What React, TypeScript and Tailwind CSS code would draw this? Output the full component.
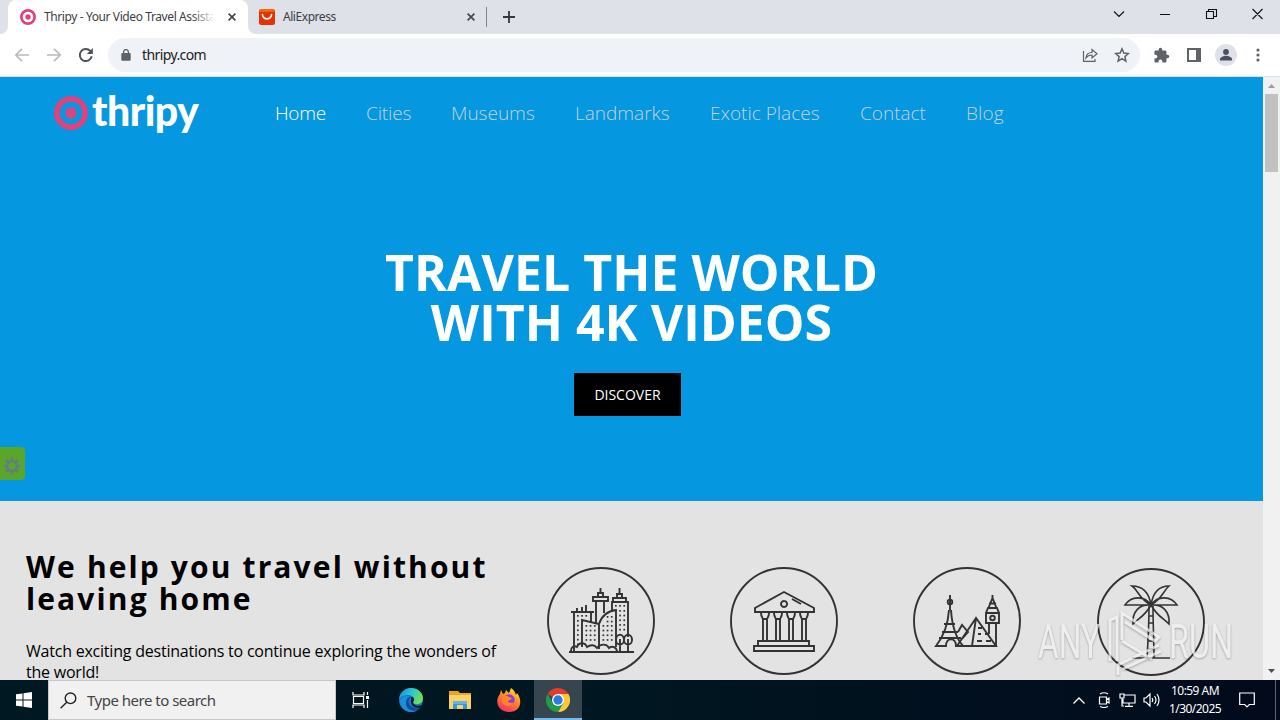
import { ReactNode } from "react";
import { MdExtension } from "react-icons/md";

/* ── Data ── */
const NAV_ITEMS = [
  { label: "Home", className: "w-[91px] tracking-[-0.3px] text-white" },
  { label: "Cities", className: "w-[85px] tracking-[-0.15px] text-[#c3d3dc]" },
  { label: "Museums", className: "w-[124px] text-[#c3d3dc]" },
  { label: "Landmarks", className: "w-[135px] text-[#c3d3dc]" },
  { label: "Exotic Places", className: "w-[150px] text-[#c3d3dc]" },
  { label: "Contact", className: "w-[106px] text-[#c3d3dc]" },
  { label: "Blog", className: "tracking-[0.1px] text-[#c3d3dc]" },
];

const win = (x: number, y: number, key: string) => (
  <rect key={key} x={x} y={y} width="1.7" height="1.7" fill="#333" stroke="none" />
);

function windows(x: number, y: number, cols: number, rows: number) {
  const out: ReactNode[] = [];
  for (let r = 0; r < rows; r++) {
    for (let c = 0; c < cols; c++) out.push(win(x + c * 4.2, y + r * 4.7, `${x}-${y}-${r}-${c}`));
  }
  return out;
}

/* ── Browser chrome ── */
function Target({ className }: { className: string }) {
  return (
    <svg viewBox="0 0 32 32" className={className} fill="none">
      <circle cx="16" cy="16" r="13.3" stroke="#dc437f" strokeWidth="5.4" />
      <circle cx="16" cy="16" r="5.3" fill="#dc437f" />
    </svg>
  );
}

function CloseIcon() {
  return (
    <svg viewBox="0 0 8 8" className="h-2 w-2 shrink-0" stroke="#45494e" strokeWidth="1.7">
      <path d="M.6.6l6.8 6.8M7.4.6L.6 7.4" />
    </svg>
  );
}

function TabStrip() {
  return (
    <div className="flex h-[34px] bg-[#dee1e8] text-[12px] text-[#3c4043]">
      <div className="flex w-2 bg-white">
        <div className="w-2 rounded-br-lg bg-[#dee1e8]" />
      </div>
      <div className="flex w-[240px] items-center rounded-t-lg bg-white pl-3">
        <Target className="h-4 w-4 shrink-0" />
        <div className="relative ml-2 h-[18px] w-[171px] overflow-hidden whitespace-nowrap leading-[18px] tracking-[-0.4px]">
          Thripy - Your Video Travel Assista
          <div className="absolute inset-y-0 right-0 w-6 bg-linear-to-r from-transparent to-white" />
        </div>
        <div className="ml-[13px]">
          <CloseIcon />
        </div>
      </div>
      <div className="flex w-[239px] bg-white">
        <div className="flex flex-1 items-center rounded-bl-lg bg-[#dee1e8] pl-[11px]">
          <svg viewBox="0 0 16 16" className="h-4 w-4" fill="none">
            <rect width="16" height="16" rx="2.5" fill="#e43204" />
            <path d="M0 2.800V2.500Q0 0 2.500 0h11Q16 0 16 2.500v.3z" fill="#f36b0c" />
            <path d="M3.400 5.500c1 5.800 8.200 5.800 9.200 0" stroke="#fff" strokeWidth="1.500" strokeLinecap="round" />
          </svg>
          <span className="ml-2 w-[184px] tracking-[-0.45px]">AliExpress</span>
          <CloseIcon />
          <div className="ml-[11px] h-5 w-px bg-[#81858b]" />
        </div>
      </div>
      <svg viewBox="0 0 12 12" className="mt-[11px] ml-4 h-3 w-3" stroke="#35383d" strokeWidth="1.8">
        <path d="M6 0v12M0 6h12" />
      </svg>
      <svg viewBox="0 0 166 12" className="mt-2 mr-[17px] ml-auto h-3 w-[166px]" fill="none" stroke="#111" strokeWidth="1.100">
        <path d="M17 3.500l5 5 5-5M63 6.500h10M109.500 3.500h7v7h-7zM111.500 3.500v-2h8v7h-2.500M155.500 1l10 10M165.500 1l-10 10" />
      </svg>
    </div>
  );
}

function Toolbar() {
  return (
    <div className="flex h-[43px] items-center border-b border-[#cfe4ef] bg-white pl-[14px] text-[#5f6368]">
      <svg viewBox="0 0 16 14" className="h-[14px] w-4" fill="none" stroke="#b9bbbe" strokeWidth="1.7">
        <path d="M15 7H2M8 .8L1.800 7 8 13.200" />
      </svg>
      <svg viewBox="0 0 16 14" className="ml-4 h-[14px] w-4" fill="none" stroke="#b9bbbe" strokeWidth="1.7">
        <path d="M1 7h13M8 .8L14.200 7 8 13.200" />
      </svg>
      <svg viewBox="0 0 16 16" className="ml-4 h-4 w-4" fill="none" stroke="#4e5156" strokeWidth="1.900">
        <path d="M13.700 9.200a6 6 0 1 1-1.500-5.300L14 5.700" />
        <path d="M14.800 1v6h-6z" fill="#4e5156" stroke="none" />
      </svg>
      <div className="ml-[14px] flex h-[34px] w-[1032px] items-center rounded-full bg-[#eff2f6] pl-[13px]">
        <svg viewBox="0 0 10 12" className="h-3 w-[10px]" fill="none">
          <rect x=".3" y="4" width="9.400" height="7.800" rx="1" fill="#5f6368" />
          <path d="M2.600 4.500V3a2.400 2.400 0 0 1 4.800 0v1.500" stroke="#5f6368" strokeWidth="1.300" />
        </svg>
        <span className="ml-[11px] pb-px text-[14px] tracking-[-0.6px] text-[#202124]">thripy.com</span>
        <svg viewBox="0 0 16 16" className="ml-auto h-4 w-4" fill="none" stroke="currentColor" strokeWidth="1.200">
          <path d="M1.500 4v10.400H13V12M4 11c.3-4 2.500-5.500 6-5.500V2.500l5 4.200-5 4.200V8C7.500 8 5.600 8.600 4 11z" />
        </svg>
        <svg viewBox="0 0 16 16" className="mr-[10px] ml-4 h-4 w-4" fill="none" stroke="currentColor" strokeWidth="1.500">
          <path d="M8 1.800l1.800 4.300 4.600.4-3.500 3.100 1 4.500L8 11.700l-3.900 2.400 1-4.500L1.600 6.500l4.600-.4z" />
        </svg>
      </div>
      <MdExtension className="ml-[13px] h-[17px] w-[17px]" />
      <svg viewBox="0 0 14 14" className="ml-[17px] h-[14px] w-[14px]">
        <path d="M1 1h12v12H1z" fill="none" stroke="currentColor" strokeWidth="2" />
        <path d="M9 0h5v14H9z" fill="currentColor" />
      </svg>
      <svg viewBox="0 0 22 22" className="ml-[14px] h-[22px] w-[22px]">
        <circle cx="11" cy="11" r="11" fill="#dfe1e8" />
        <circle cx="11" cy="7.900" r="2.900" fill="#4b4f63" />
        <path d="M5 16.500v-1.400c0-2 4-3.300 6-3.300s6 1.300 6 3.300v1.400z" fill="#4b4f63" />
      </svg>
      <svg viewBox="0 0 4 14" className="ml-[19px] h-[14px] w-1" fill="currentColor">
        <circle cx="2" cy="2" r="1.600" />
        <circle cx="2" cy="7" r="1.600" />
        <circle cx="2" cy="12" r="1.600" />
      </svg>
    </div>
  );
}

/* ── Category icons, drawn in a 108px circle ── */
function Badge({ children }: { children: ReactNode }) {
  return (
    <svg viewBox="0 0 108 108" className="h-[108px] w-[108px] shrink-0" fill="none" stroke="#333" strokeWidth="1.900">
      <circle cx="54" cy="54" r="53" />
      {children}
    </svg>
  );
}

function CityIcon() {
  return (
    <Badge>
      <path d="M22 85h65M27 84V45M24 45h23M30 45v-4M35 45v-5M39 45v-7M44 45v10M35 80V53l17 4v25M52 57c3-9 9-13 17-14v37" />
      <path d="M46 30h15v4H46zM49 34v22M57 34v12M51 30v-4h5v4M53.500 26v-5" />
      <path d="M65 43v-8h16v35M66 35v-4h13v4M70 31v-4h5v4M72.500 27v-6" />
      <path d="M24 84c0-4 3-6 6-4 2-5 8-5 10 0 4-3 8-2 10 1 4-5 10-4 12 0 4-3 8 0 8 4" />
      <path d="M73 85V72M81 85V72M69 73c0-7 8-7 8 0 0 6-8 6-8 0zM77 73c0-7 8-7 8 0 0 6-8 6-8 0z" />
      {windows(30, 48, 3, 1)}
      {windows(30, 53, 1, 6)}
      {windows(38.500, 58, 3, 4)}
      {windows(55.500, 58, 3, 4)}
      {windows(59.700, 49, 2, 2)}
      {windows(68, 38, 3, 1)}
      {windows(72.200, 43, 2, 5)}
    </Badge>
  );
}

function MuseumIcon() {
  return (
    <Badge>
      <path d="M25 45v-4l29-16 30 16v4zM54 34a3 3 0 1 0 .1 0M62 32l9 5M28 74h51v5H28zM24 79h60v5H24z" />
      <path d="M31 46c0 3 1 4 2 6h4c1-2 2-3 2-6M44 46c0 3 1 4 2 6h4c1-2 2-3 2-6M57 46c0 3 1 4 2 6h4c1-2 2-3 2-6M70 46c0 3 1 4 2 6h4c1-2 2-3 2-6" />
      <path d="M33 52v22M37 52v22M46 52v22M50 52v22M59 52v22M63 52v22M72 52v22M76 52v22" />
    </Badge>
  );
}

function LandmarkIcon() {
  return (
    <Badge>
      <path d="M37 28v15M36 43c-1 16-6 27-13 36h10c0-9 10-9 10 0h7c-7-8-11-20-12-36M31 57h11M29 65h16M26 71h22" />
      <circle cx="37" cy="35" r="2.300" />
      <path d="M45 65l4-7 6 7-6 7M63 51L44 79h39zM63 51l-4 28M65 61h4M65 67h3M72 67h4M64 74h5M73 74h5" />
      <path d="M73 46h13v10H73zM73 46l2-5h9l2 5M75.500 41l4-10 4 10M79.500 31v-3M76 36.500h7M76 57v10M83 57v22" />
      <circle cx="79.500" cy="51" r="2.300" />
    </Badge>
  );
}

function PalmIcon() {
  return (
    <Badge>
      <g strokeWidth="1.600">
        <path d="M54 37C52 24 45 18 35 18c6 4 7 13 19 19C56 24 63 18 72 18c-5 4-7 13-18 19M54 37C47 27 34 28 28 37zM54 37c7-10 20-9 26 0zM54 37c-12-1-19 7-18 19 6-6 12-8 18-19zM54 37c12-1 19 7 18 19-6-6-12-8-18-19z" />
        <path d="M52 38c0 20-1 36-2 52M56 38c0 20 1 36 1 52M52 48h4M51 55h5M51 64h5M51 73h5M51 81h6M35 90h38" />
      </g>
    </Badge>
  );
}

/* ── Page sections ── */
function Hero() {
  return (
    <section className="relative h-[424px] bg-[#0597df] text-white">
      <header className="flex pt-[15px] pl-[54px]">
        <Target className="mt-1 h-[34px] w-[34px]" />
        <div className="ml-1 h-[50px] w-[111px] font-['Lato'] text-[41px] leading-[37px] font-black tracking-[-0.5px]">thripy</div>
        <nav className="ml-[72px] flex pt-[6px] font-['Open_Sans'] text-[19px] leading-[30px] font-light whitespace-nowrap">
          {NAV_ITEMS.map((item) => (
            <a key={item.label} className={item.className}>
              {item.label}
            </a>
          ))}
        </nav>
      </header>
      <h1 className="mt-[105px] text-center font-['Open_Sans'] text-[50px] leading-[50px] font-bold">
        TRAVEL THE WORLD
        <br />
        WITH 4K VIDEOS
      </h1>
      <button className="mt-[26px] ml-[574px] h-[43px] w-[107px] bg-black font-['Open_Sans'] text-[14px]">
        DISCOVER
      </button>
      <div className="absolute top-[370px] left-0 flex h-[33px] w-[25px] items-center rounded-r bg-[#5aa62b] pt-1 pl-[3px]">
        <svg viewBox="0 0 18 18" className="h-[18px] w-[18px]" fill="none" stroke="#607f80" strokeWidth="2.500">
          <circle cx="9" cy="9" r="5" />
          <path d="M9 .5v4M9 13.500v4M.5 9h4M13.500 9h4M3 3l3 3M12 12l3 3M15 3l-3 3M6 12l-3 3" />
        </svg>
      </div>
    </section>
  );
}

function Intro() {
  return (
    <section className="flex h-[179px] overflow-hidden bg-[#e3e3e3] text-black">
      <div className="w-[547px] shrink-0 pt-[50px] pl-[26px]">
        <h2 className="font-['Open_Sans'] text-[30px] leading-8 font-bold tracking-[2.12px] whitespace-nowrap">
          We help you travel without
          <br />
          leaving home
        </h2>
        <p className="mt-[26px] font-['Open_Sans'] text-[16px] leading-[21px] tracking-[-0.22px] whitespace-nowrap">
          Watch exciting destinations to continue exploring the wonders of
          <br />
          the world!
        </p>
      </div>
      <div className="flex gap-[75px] pt-[66px]">
        <CityIcon />
        <MuseumIcon />
        <LandmarkIcon />
        <div className="ml-px pt-px">
          <PalmIcon />
        </div>
      </div>
    </section>
  );
}

function Scrollbar() {
  return (
    <div className="flex w-[17px] flex-col items-center bg-[#f1f1f1]">
      <svg viewBox="0 0 17 17" className="h-[17px] w-[17px]">
        <path d="M5 11l3.500-4 3.500 4z" fill="#9c9c9c" />
      </svg>
      <div className="h-[78px] w-[13px] bg-[#c1c1c1]" />
      <svg viewBox="0 0 17 17" className="mt-auto h-[17px] w-[17px]">
        <path d="M5 6l3.500 4L12 6z" fill="#505050" />
      </svg>
    </div>
  );
}

function Watermark() {
  return (
    <svg viewBox="0 0 210 70" className="absolute top-[607px] left-[1032px] h-[70px] w-[210px] opacity-70 drop-shadow-[0px_1px_1px_rgba(0,0,0,.4)]">
      <g fill="#f4f4f4" fontFamily="Roboto" fontSize="49" fontWeight="400">
        <text x="6" y="51" textLength="62" lengthAdjust="spacingAndGlyphs">ANY</text>
        <text x="137" y="51" textLength="64" lengthAdjust="spacingAndGlyphs">RUN</text>
      </g>
      <g fill="none" stroke="#f4f4f4" strokeWidth="3">
        <path d="M78 54V13l7-3v44M90 33V6l37 24-4 4-30-19M90 34l30 18M91 62l38-18M86 68V58l41-20" />
      </g>
    </svg>
  );
}

/* ── Taskbar ── */
function EdgeIcon() {
  return (
    <svg viewBox="0 0 24 24" className="h-6 w-6">
      <defs>
        <linearGradient id="edge" x1="0" y1="0" x2="1" y2=".3">
          <stop stopColor="#168bd5" />
          <stop offset=".55" stopColor="#2cc4d4" />
          <stop offset="1" stopColor="#69e05c" />
        </linearGradient>
      </defs>
      <circle cx="12" cy="12" r="12" fill="#1474c4" />
      <path d="M0 11C1 4 6 0 12 0c7 0 12 5 12 10 0 5-4 7-8 6-3-1-1-2-1-4 0-6-10-7-15-1z" fill="url(#edge)" />
      <path d="M8 11c-2 5 2 11 9 12-8 3-16-2-16-10 1-5 7-6 10-5-2 1-3 2-3 3z" fill="#1b8edc" />
      <path d="M12 9c-6 4-1 13 9 11-5 5-14 3-14-5 0-4 3-6 5-6z" fill="#0c4b99" />
      <path d="M12 9c3 0 4 2 2 5 0 3 5 5 9 3l1-3v5l-3 1c-6 0-9-3-9-6z" fill="#001820" />
    </svg>
  );
}

function FolderIcon() {
  return (
    <svg viewBox="0 0 22 20" className="h-5 w-[22px]">
      <path d="M0 1h9l2 2h11v4H0z" fill="#e9a52b" />
      <path d="M0 5h22v14H0z" fill="#fbd263" />
      <path d="M4 19v-8h14v8h-4v-4H8v4z" fill="#3996d8" />
      <path d="M4 11h14v3H4z" fill="#5cb6e9" />
    </svg>
  );
}

function FirefoxIcon() {
  return (
    <svg viewBox="0 0 24 24" className="h-6 w-6">
      <defs>
        <linearGradient id="fox" x1=".8" y1="0" x2=".3" y2="1">
          <stop stopColor="#ffe33b" />
          <stop offset=".45" stopColor="#ff8a25" />
          <stop offset="1" stopColor="#f52b68" />
        </linearGradient>
      </defs>
      <path d="M4 2l2 4 2-1 1-3 3 3 2-5c3 2 4 4 5 7l1-2c6 7 4 19-8 19C1 24-3 13 3 6z" fill="url(#fox)" />
      <circle cx="12" cy="12" r="5.700" fill="#8a3bde" />
      <path d="M5 8c3-2 6 0 7 1l3 1c-1 2-3 2-4 3s3 3 6 1c-2 6-12 5-12-2z" fill="#ff8327" />
    </svg>
  );
}

function ChromeIcon() {
  return (
    <svg viewBox="0 0 24 24" className="h-6 w-6">
      <path d="M12 12L1.600 6A12 12 0 0 1 22.400 6z" fill="#e33b2e" />
      <path d="M12 12V6h10.400A12 12 0 0 1 12 24l5.200-9z" fill="#fcc934" />
      <path d="M12 12l5.200 3L12 24A12 12 0 0 1 1.600 6l5.200 9z" fill="#229a4b" />
      <circle cx="12" cy="12" r="6" fill="#fff" />
      <circle cx="12" cy="12" r="4.700" fill="#2c7be5" />
    </svg>
  );
}

function Taskbar() {
  return (
    <footer className="flex h-10 bg-linear-to-r from-[#001821] via-[#001620] to-[#020a1c] text-white">
      <div className="flex w-12 items-center justify-center">
        <svg viewBox="0 0 16 16" className="h-4 w-4" fill="#fff">
          <path d="M0 2.300l6.500-.9v6.100H0zM7.500 1.200L16 0v7.500H7.500zM0 8.500h6.500v6.100L0 13.700zM7.500 8.500H16V16l-8.500-1.200z" />
        </svg>
      </div>
      <div className="flex w-72 items-center border border-[#c9c9c9] bg-[#f1f1f1] pl-[11px] text-[#444]">
        <svg viewBox="0 0 17 17" className="h-[17px] w-[17px]" fill="none" stroke="#222" strokeWidth="1.400">
          <circle cx="10.500" cy="6.300" r="5.300" />
          <path d="M6.700 10.200L.6 16.300" />
        </svg>
        <span className="ml-[10px] text-[15px] tracking-[-0.5px]">Type here to search</span>
      </div>
      <div className="flex w-12 items-center justify-center">
        <svg viewBox="0 0 17 16" className="h-4 w-[17px]" fill="none" stroke="#fff" strokeWidth="1.200">
          <path d="M1 0v3h11V0M1 16v-3h11v3M1.500 4.500h10v7h-10zM15.500 0v3M15.500 8v8" />
          <path d="M14 4h3v3h-3z" fill="#fff" stroke="none" />
        </svg>
      </div>
      <div className="ml-[2px] flex w-[50px] items-center justify-center">
        <EdgeIcon />
      </div>
      <div className="flex w-12 items-center justify-center">
        <FolderIcon />
      </div>
      <div className="flex w-[50px] items-center justify-center">
        <FirefoxIcon />
      </div>
      <div className="flex w-12 items-center justify-center border-b-2 border-[#76b9ed] bg-[#37464e] pt-[2px]">
        <ChromeIcon />
      </div>
      <div className="ml-auto flex items-center">
        <svg viewBox="0 0 12 7" className="h-[7px] w-3" fill="none" stroke="#fff" strokeWidth="1.300">
          <path d="M.5 6.500L6 1l5.500 5.500" />
        </svg>
        <svg viewBox="0 0 12 16" className="ml-[13px] h-4 w-3" fill="none" stroke="#fff" strokeWidth="1.200">
          <path d="M1.500 5h7v7h-7zM8.500 7.500l2.500-1.500v5l-2.500-1.500M2 2q4-2.500 8 0M2 14.500q4 2 8 0" />
        </svg>
        <svg viewBox="0 0 17 16" className="ml-[9px] h-4 w-[17px]" fill="none" stroke="#fff" strokeWidth="1.200">
          <path d="M5 3h11v8H4V7M10 11v3M6 14.400h8M1 2h4v4H1zM3 6v8h2" />
        </svg>
        <svg viewBox="0 0 17 16" className="ml-[7px] h-4 w-[17px]" fill="none" stroke="#fff" strokeWidth="1.200">
          <path d="M1 6h2l4-4v12L3 10H1zM9 6q1.500 2 0 4M11.500 4q3 4 0 8M14 2q4 6 0 12" />
        </svg>
        <div className="ml-[6px] w-[58px] text-center text-[12px] leading-[18px] tracking-[-0.55px] whitespace-nowrap">
          10:59 AM
          <br />
          1/30/2025
        </div>
        <svg viewBox="0 0 16 16" className="ml-[15px] h-4 w-4" fill="none" stroke="#fff" strokeWidth="1.200">
          <path d="M.7 1h14.600v11.500h-5L8 14.800l-2.300-2.300h-5z" />
        </svg>
        <div className="ml-[20px] h-10 w-px bg-[#5c6570]" />
        <div className="w-1" />
      </div>
    </footer>
  );
}

export default function App() {
  return (
    <div className="relative h-[720px] w-[1280px] overflow-hidden font-['Noto_Sans',sans-serif]">
      <TabStrip />
      <Toolbar />
      <div className="flex h-[603px]">
        <main className="w-[1263px]">
          <Hero />
          <Intro />
        </main>
        <Scrollbar />
      </div>
      <Watermark />
      <Taskbar />
    </div>
  );
}
